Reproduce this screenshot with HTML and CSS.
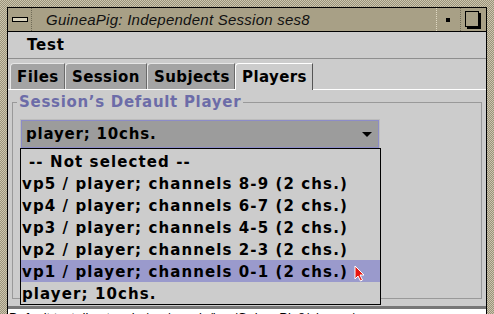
FILE: index.html
```html
<!DOCTYPE html>
<html>
<head>
    <title>GuineaPig: Independent Session ses8</title>
    <link rel="stylesheet" href="styles.css">
</head>
<body>
<div class="frame">
    <div class="window">
        <div class="titlebar">
            <div class="tb-btn tb-min"><span class="min-bar"></span></div>
            <div class="title">GuineaPig: Independent Session ses8</div>
            <div class="tb-btn tb-dot"><span class="dot"></span></div>
            <div class="tb-btn tb-max"><span class="max-box"></span></div>
        </div>
        <div class="menubar">
            <span class="menu-item">Test</span>
        </div>
        <div class="tabs">
            <div class="tab tab-files">Files</div>
            <div class="tab tab-session">Session</div>
            <div class="tab tab-subjects">Subjects</div>
            <div class="tab tab-players active">Players</div>
        </div>
        <div class="panel">
            <fieldset class="group">
                <legend>Session’s Default Player</legend>
                <div class="combo">
                    <div class="combo-box">
                        <span>player; 10chs.</span>
                        <span class="arrow"></span>
                    </div>
                    <ul class="combo-list">
                        <li class="indent">-- Not selected --</li>
                        <li>vp5 / player; channels 8-9 (2 chs.)</li>
                        <li>vp4 / player; channels 6-7 (2 chs.)</li>
                        <li>vp3 / player; channels 4-5 (2 chs.)</li>
                        <li>vp2 / player; channels 2-3 (2 chs.)</li>
                        <li class="hover">vp1 / player; channels 0-1 (2 chs.)
                            <svg class="cursor" width="11" height="17" viewBox="0 0 11 17">
                                <path d="M1 1 L1 14 L4 11 L6.5 16 L8.5 15 L6 10 L10 10 Z" fill="#e8150f" stroke="#fff" stroke-width="1"/>
                            </svg>
                        </li>
                        <li>player; 10chs.</li>
                    </ul>
                </div>
            </fieldset>
        </div>
        <div class="status">Default text directory is /usr/people/lmu/GuineaPig8/players/</div>
    </div>
</div>
</body>
</html>
```

FILE: styles.css
```css
* {
    padding: 0;
    margin: 0;
    box-sizing: border-box;
}

body {
    width: 494px;
    height: 314px;
    overflow: hidden;
    font-family: "DejaVu Sans", sans-serif;
    background-color: #cccccc;
}

.frame {
    width: 494px;
    height: 314px;
    padding: 7px 7px 0 7px;
    background-color: #b4ad95;
    background-image: repeating-conic-gradient(#9a937b 0 25%, #cdc6ae 0 50%);
    background-size: 2px 2px;
}

.window {
    height: 100%;
    display: flex;
    flex-direction: column;
    border: 1px solid #000;
    border-bottom: none;
    background-color: #cccccc;
}

/* title bar */
.titlebar {
    height: 24px;
    flex: none;
    display: flex;
    background-color: #a8a086;
    border-bottom: 1px solid #000;
}

.tb-btn {
    width: 25px;
    display: flex;
    align-items: center;
    justify-content: center;
}

.tb-min {
    width: 24px;
    border-right: 1px dotted #6f6a56;
}

.min-bar {
    width: 16px;
    height: 5px;
    border: 1px solid #000;
    background-color: #d8d2bc;
}

.title {
    flex: 1;
    padding-left: 14px;
    font-family: "Liberation Sans", Arial, sans-serif;
    font-style: italic;
    font-size: 15px;
    line-height: 23px;
    letter-spacing: 0.25px;
    color: #111;
}

.tb-dot {
    border-left: 1px dotted #e0dac4;
    border-right: 1px dotted #6f6a56;
}

.dot {
    width: 4px;
    height: 4px;
    background-color: #000;
    margin-left: -1px;
}

.max-box {
    width: 14px;
    height: 16px;
    border: 1px solid #000;
    box-shadow: 2px 2px 0 #000;
    margin: -2px 0 0 -3px;
}

/* menu */
.menubar {
    height: 27px;
    flex: none;
    padding-left: 19px;
    border-bottom: 1px solid #8e8e8e;
}

.menu-item {
    font-weight: bold;
    font-size: 15px;
    line-height: 26px;
    letter-spacing: 0.8px;
}

/* tabs */
.tabs {
    display: flex;
    flex: none;
    padding: 4px 0 0 2px;
    height: 30px;
}

.tab {
    height: 26px;
    padding-left: 6px;
    font-weight: bold;
    font-size: 15px;
    line-height: 26px;
    letter-spacing: 0.4px;
    white-space: nowrap;
    background-color: #a4a4a4;
    border-top: 1px solid #e6e6e6;
    border-left: 1px solid #e6e6e6;
    border-right: 1px solid #6a6a6a;
    border-top-left-radius: 4px;
}

.tab-files { width: 55px; }
.tab-session { width: 82px; }
.tab-subjects { width: 88px; }
.tab-players { width: 78px; }

.tab.active {
    background-color: #cccccc;
    border-top: 1px solid #fff;
    border-left: 1px solid #fff;
    border-right: 1px solid #555;
    height: 27px;
    margin-bottom: -1px;
    position: relative;
}

/* panel */
.panel {
    height: 217px;
    flex: none;
    border-top: 1px solid #fff;
    padding: 0 4px;
}

.group {
    height: 205px;
    margin-top: 4px;
    border: 1px solid #999;
    padding: 0 8px;
}

.group legend {
    margin-left: -4px;
    padding: 0 2px;
    color: #6c6ca8;
    font-weight: bold;
    font-size: 15px;
    line-height: 16px;
    letter-spacing: 0.7px;
}

.combo {
    position: relative;
    width: 358px;
    margin-top: 10px;
}

.combo-box {
    height: 28px;
    display: flex;
    align-items: center;
    justify-content: space-between;
    padding: 0 6px 0 4px;
    background-color: #9c9c9c;
    border: 1px solid #8c8cc8;
    outline: 1px solid #bcbcbc;
    font-weight: bold;
    font-size: 15px;
    letter-spacing: 0.8px;
}

.arrow {
    width: 0;
    height: 0;
    border-left: 5px solid transparent;
    border-right: 5px solid transparent;
    border-top: 5px solid #000;
}

.combo-list {
    position: absolute;
    top: 28px;
    left: -1px;
    width: 361px;
    padding-top: 1px;
    list-style: none;
    background-color: #cccccc;
    border: 1px solid #000;
    z-index: 10;
}

.combo-list li {
    position: relative;
    height: 22px;
    padding: 2px 0 0 1px;
    font-weight: bold;
    font-size: 15px;
    line-height: 21px;
    letter-spacing: 1.1px;
    white-space: nowrap;
}

.combo-list li.indent {
    padding-left: 8px;
}

.combo-list li.hover {
    background-color: #9a9acc;
}

.cursor {
    position: absolute;
    left: 333px;
    top: 5px;
}

/* status line */
.status {
    flex: 1;
    border-top: 3px solid #777;
    background-color: #fff;
    padding-left: 1px;
    font-family: "Liberation Sans", Arial, sans-serif;
    font-size: 13px;
    line-height: 14px;
    padding-top: 2px;
}
```
